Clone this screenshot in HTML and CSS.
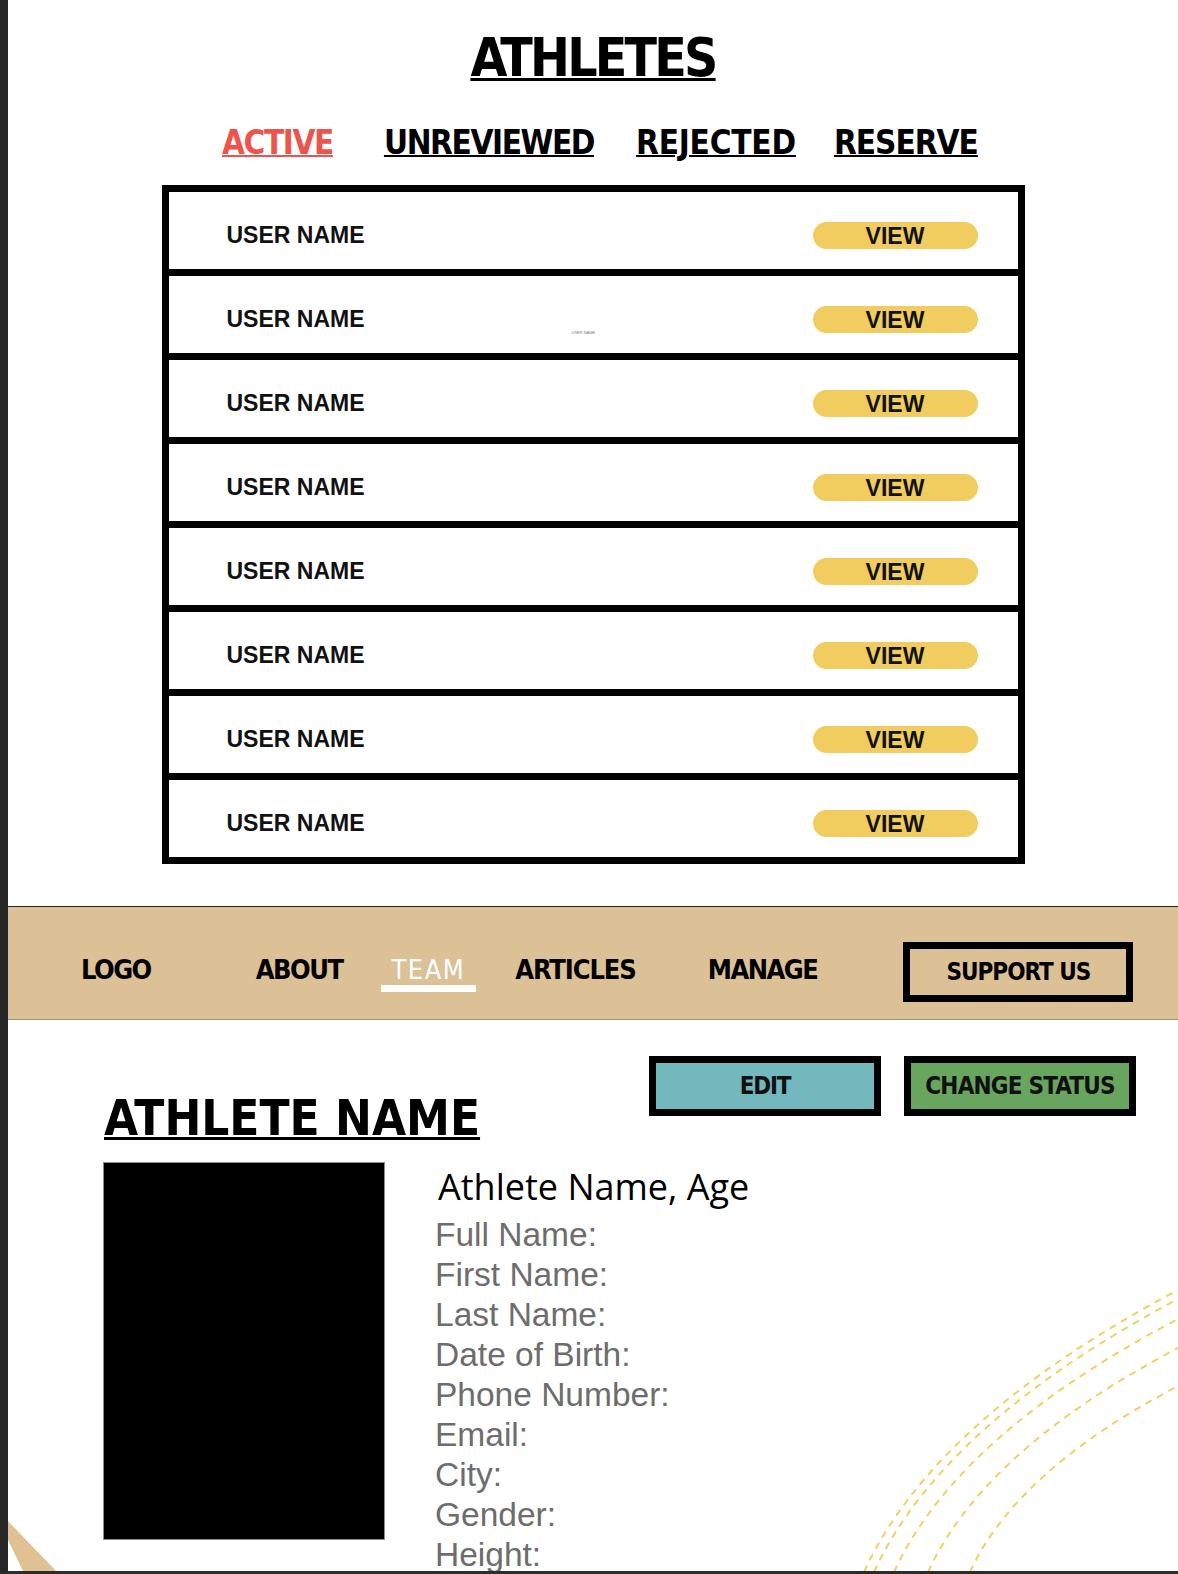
FILE: index.html
```html
<!DOCTYPE html>
<html lang="en">
<head>
<meta charset="utf-8">
<title>Athletes</title>
<link rel="stylesheet" href="styles.css">
</head>
<body>
<div class="page">
  <section class="athletes">
    <h1 class="athletes-title display">ATHLETES</h1>
    <nav class="tabs display">
      <a class="tab tab-active">ACTIVE</a>
      <a class="tab tab-unreviewed">UNREVIEWED</a>
      <a class="tab tab-rejected">REJECTED</a>
      <a class="tab tab-reserve">RESERVE</a>
    </nav>
    <ul class="athlete-list">
      <li class="athlete-row"><span class="athlete-name">USER NAME</span><a class="view-btn">VIEW</a></li>
      <li class="athlete-row"><span class="athlete-name">USER NAME</span><span class="tiny-label">USER NAME</span><a class="view-btn">VIEW</a></li>
      <li class="athlete-row"><span class="athlete-name">USER NAME</span><a class="view-btn">VIEW</a></li>
      <li class="athlete-row"><span class="athlete-name">USER NAME</span><a class="view-btn">VIEW</a></li>
      <li class="athlete-row"><span class="athlete-name">USER NAME</span><a class="view-btn">VIEW</a></li>
      <li class="athlete-row"><span class="athlete-name">USER NAME</span><a class="view-btn">VIEW</a></li>
      <li class="athlete-row"><span class="athlete-name">USER NAME</span><a class="view-btn">VIEW</a></li>
      <li class="athlete-row"><span class="athlete-name">USER NAME</span><a class="view-btn">VIEW</a></li>
    </ul>
  </section>

  <header class="site-nav display">
    <a class="nav-link nav-logo">LOGO</a>
    <a class="nav-link nav-about">ABOUT</a>
    <a class="nav-link nav-team">TEAM</a>
    <a class="nav-link nav-articles">ARTICLES</a>
    <a class="nav-link nav-manage">MANAGE</a>
    <a class="support-btn">SUPPORT US</a>
  </header>

  <section class="profile">
    <div class="profile-head">
      <h2 class="profile-title display">ATHLETE NAME</h2>
      <div class="actions display">
        <a class="action-btn action-edit">EDIT</a>
        <a class="action-btn action-status">CHANGE STATUS</a>
      </div>
    </div>
    <div class="profile-body">
      <div class="photo"></div>
      <div class="details">
        <p class="summary">Athlete Name, Age</p>
        <ul class="facts">
          <li>Full Name:</li>
          <li>First Name:</li>
          <li>Last Name:</li>
          <li>Date of Birth:</li>
          <li>Phone Number:</li>
          <li>Email:</li>
          <li>City:</li>
          <li>Gender:</li>
          <li>Height:</li>
        </ul>
      </div>
    </div>
  </section>

  <svg class="deco" width="1170" height="1571" viewBox="0 0 1170 1571" aria-hidden="true">
    <polygon class="deco-wedge" points="0,1521 48,1571 15,1571 0,1540"/>
    <g class="deco-arcs">
      <path d="M856 1572 Q926 1419 1170 1290"/>
      <path d="M866 1572 Q934 1424 1170 1299"/>
      <path d="M886 1572 Q949 1435 1170 1319"/>
      <path d="M920 1572 Q976 1450 1170 1348"/>
      <path d="M962 1572 Q1008 1471 1170 1386"/>
    </g>
  </svg>
</div>
</body>
</html>
```
FILE: styles.css
```css
* {
  box-sizing: border-box;
  margin: 0;
  padding: 0;
}

body {
  margin: 0;
  background: #fff;
  font-family: "Liberation Sans", Arial, sans-serif;
  color: #000;
}

a {
  color: inherit;
  text-decoration: none;
}

.page {
  position: relative;
  width: 1178px;
  height: 1574px;
  overflow: hidden;
  border-left: 8px solid #262626;
  border-bottom: 3px solid #2c2c2c;
  background: #fff;
}

.display {
  font-family: "DejaVu Sans Condensed", "DejaVu Sans", sans-serif;
  font-weight: 700;
}

/* ---------- athletes list ---------- */
.athletes {
  display: flex;
  flex-direction: column;
  align-items: center;
}

.athletes-title {
  margin-top: 31px;
  font-size: 53px;
  line-height: 53px;
  letter-spacing: -2.8px;
  text-decoration: underline;
  text-decoration-thickness: 3px;
  text-underline-offset: 2px;
}

.tabs {
  align-self: stretch;
  display: flex;
  margin-top: 42px;
  padding-left: 214px;
  font-size: 33px;
  line-height: 33px;
  letter-spacing: -1.4px;
}

.tab {
  text-decoration: underline;
  text-decoration-thickness: 2px;
  text-underline-offset: 1px;
  white-space: nowrap;
}

.tab-active { color: #ef544c; }
.tab-unreviewed { margin-left: 51px; }
.tab-rejected { margin-left: 42px; letter-spacing: -0.2px; }
.tab-reserve { margin-left: 38px; letter-spacing: -1px; }

.athlete-list {
  list-style: none;
  width: 863px;
  margin-top: 26px;
  border: 7px solid #000;
  border-bottom: 0;
}

.athlete-row {
  position: relative;
  height: 84px;
  border-bottom: 7px solid #000;
  display: flex;
  align-items: center;
  justify-content: space-between;
  padding: 10px 40px 0 58px;
}

.athlete-name {
  font-weight: 700;
  font-size: 23px;
  color: #111;
}

.tiny-label {
  position: absolute;
  left: 403px;
  top: 54px;
  font-size: 4px;
  color: #7a7a7a;
}

.view-btn {
  width: 165px;
  height: 27px;
  border-radius: 14px;
  background: #f0cd5e;
  font-weight: 700;
  font-size: 23px;
  line-height: 25px;
  padding-top: 2px;
  text-align: center;
  color: #111;
}

/* ---------- nav ---------- */
.site-nav {
  margin-top: 42px;
  height: 114px;
  border-top: 1px solid #222;
  border-bottom: 1px solid #a29379;
  background: #dcc096;
  display: flex;
  align-items: center;
  padding: 12px 0 0 73px;
}

.nav-link {
  font-size: 27px;
  letter-spacing: -1.5px;
  white-space: nowrap;
  color: #000;
}

.nav-about { margin-left: 105px; }
.nav-team {
  margin-left: 38px;
  padding: 0 11px;
  border-bottom: 7px solid #fff;
  margin-bottom: -7px;
  color: #fff;
  font-weight: 400;
  letter-spacing: 1.5px;
}
.nav-articles { margin-left: 39px; letter-spacing: -1.1px; }
.nav-manage { margin-left: 72px; }

.support-btn {
  flex: none;
  margin-left: 86px;
  margin-top: 6px;
  width: 230px;
  height: 60px;
  border: 7px solid #000;
  font-size: 24px;
  line-height: 46px;
  letter-spacing: -1px;
  text-align: center;
  white-space: nowrap;
}

/* ---------- profile ---------- */
.profile {
  padding: 36px 42px 0 96px;
}

.profile-head {
  height: 106px;
  display: flex;
  justify-content: space-between;
  align-items: flex-start;
}

.profile-title {
  margin-top: 38px;
  font-size: 49px;
  line-height: 49px;
  letter-spacing: 0;
  text-decoration: underline;
  text-decoration-thickness: 3px;
  text-underline-offset: 2px;
  white-space: nowrap;
}

.actions {
  display: flex;
  gap: 23px;
}

.action-btn {
  width: 232px;
  height: 60px;
  border: 7px solid #000;
  font-size: 24px;
  line-height: 46px;
  text-align: center;
  white-space: nowrap;
  color: #111;
}

.action-edit { background: #72b8bc; letter-spacing: -1.2px; }
.action-status { background: #68a55f; letter-spacing: -0.8px; }

.profile-body {
  display: flex;
  gap: 50px;
}

.photo {
  flex: none;
  width: 282px;
  height: 378px;
  margin-left: -1px;
  background: #000;
  border: 1px solid #8c8c8c;
}

.summary {
  font-family: "Open Sans", "Noto Sans", sans-serif;
  font-size: 36px;
  line-height: 50px;
  padding-left: 3px;
  font-weight: 400;
  color: #000;
}

.facts {
  list-style: none;
  margin-top: 3px;
  font-size: 33.5px;
  line-height: 40px;
  color: #6d6d6d;
}

/* ---------- decorations ---------- */
.deco {
  position: absolute;
  left: 0;
  top: 0;
  pointer-events: none;
}

.deco-wedge {
  fill: #dfc193;
}

.deco-arcs path {
  fill: none;
  stroke: #f2cf63;
  stroke-width: 2;
  stroke-dasharray: 7 6;
}
```
